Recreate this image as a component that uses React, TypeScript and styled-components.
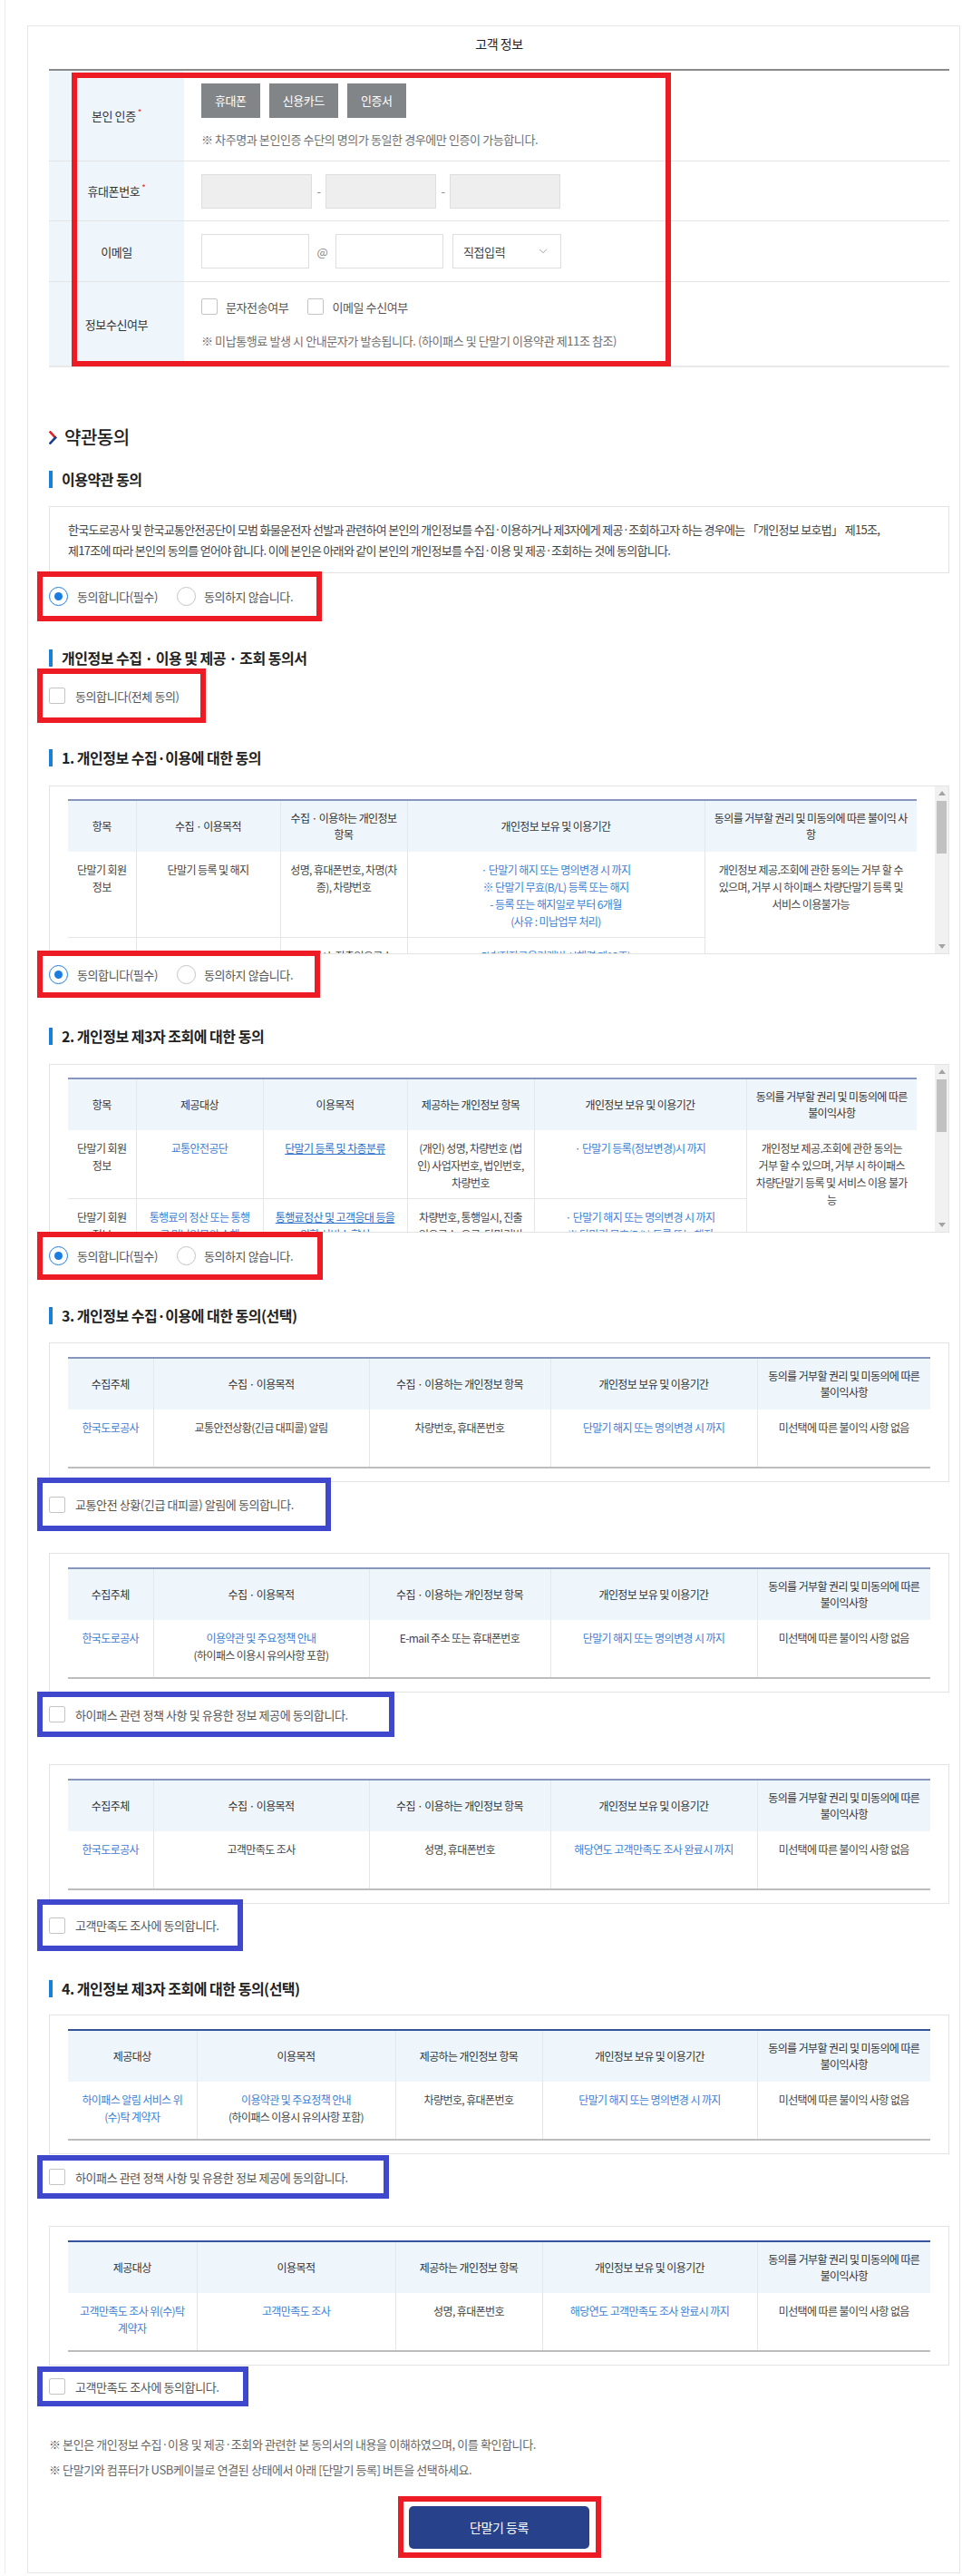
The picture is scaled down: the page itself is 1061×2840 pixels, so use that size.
import React from "react"
import styled, { createGlobalStyle } from "styled-components"
import { ChevronDown } from "lucide-react"

const RED = "#ed1c24"
const BLUE_MARK = "#3f47cc"
const LINK = "#3b80d6"

const GlobalStyle = createGlobalStyle`
  html, body { margin: 0; padding: 0; background: #fff; }
  body {
    font-family: "Noto Sans CJK KR", "Noto Sans", sans-serif;
    color: #333;
    font-size: 13px;
    letter-spacing: -0.4px;
  }
  * { box-sizing: border-box; }
`

const Page = styled.div`
  width: 1061px;
  padding-left: 5px;
`
const Frame = styled.div`
  border-left: 1px solid #ebebeb;
  padding: 28px 0 0 24px;
`
const Card = styled.div`
  width: 1029px;
  border: 1px solid #e6e6e6;
  padding: 0 11px 16px 23px;
  display: flex;
  flex-direction: column;
`
const Title = styled.div`
  height: 47px;
  padding-bottom: 9px;
  display: flex;
  align-items: center;
  justify-content: center;
  font-size: 14px;
  color: #222;
`

/* ---------- customer info table ---------- */
const InfoWrap = styled.div`
  position: relative;
  border-top: 2px solid #8a8a8a;
  border-bottom: 2px solid #e9e9e9;
`
const InfoRow = styled.div<{ $h: number; $last?: boolean }>`
  display: grid;
  grid-template-columns: 149px 1fr;
  height: ${p => p.$h}px;
  border-bottom: ${p => (p.$last ? "none" : "1px solid #e4e4e4")};
`
const Label = styled.div`
  background: #eef6fc;
  display: flex;
  align-items: center;
  justify-content: center;
  font-size: 13px;
  color: #333;
`
const Req = styled.span`
  color: #e5322d;
  font-size: 10px;
  margin-left: 2px;
  position: relative;
  top: -4px;
`
const Value = styled.div<{ $gap?: number }>`
  display: flex;
  flex-direction: column;
  justify-content: center;
  gap: ${p => p.$gap ?? 0}px;
  padding: 0 19px;
`
const Line = styled.div<{ $gap?: number }>`
  display: flex;
  align-items: center;
  gap: ${p => p.$gap ?? 0}px;
`
const AuthButton = styled.button`
  height: 38px;
  padding: 0 15px;
  border: none;
  background: #818588;
  color: #fff;
  font-family: inherit;
  font-size: 13px;
  letter-spacing: -0.4px;
`
const Note = styled.div`
  line-height: 20px;
  color: #707070;
  font-size: 13px;
`
const Field = styled.input<{ $w: number; $gray?: boolean }>`
  width: ${p => p.$w}px;
  height: 38px;
  border: 1px solid #dedede;
  background: ${p => (p.$gray ? "#eeeeee" : "#fff")};
  font-family: inherit;
  outline: none;
`
const Sep = styled.span<{ $w: number }>`
  width: ${p => p.$w}px;
  text-align: center;
  color: #888;
  font-size: 13px;
`
const Select = styled.div`
  width: 120px;
  height: 38px;
  margin-left: 10px;
  border: 1px solid #dedede;
  display: flex;
  align-items: center;
  justify-content: space-between;
  padding: 0 12px 0 11px;
  color: #444;
  font-size: 13px;
`
const InfoMark = styled.div`
  position: absolute;
  left: 25px;
  top: 2px;
  width: 661px;
  height: 324px;
  border: 6px solid ${RED};
  pointer-events: none;
`

/* ---------- headings & text ---------- */
const MainHeading = styled.h2`
  margin: 63px 0 0;
  display: flex;
  align-items: center;
  gap: 8px;
  font-size: 20px;
  font-weight: 500;
  line-height: 28px;
  color: #222;
  letter-spacing: -0.5px;
`
const SubHeading = styled.h3<{ $mt: number }>`
  margin: ${p => p.$mt}px 0 0;
  display: flex;
  align-items: center;
  font-size: 16px;
  font-weight: 700;
  line-height: 24px;
  color: #222;
  letter-spacing: -0.5px;
  &::before {
    content: "";
    width: 4px;
    height: 19px;
    background: #1a7fd6;
    margin-right: 10px;
  }
`
const TermsBox = styled.div`
  margin-top: 18px;
  border: 1px solid #e3e3e3;
  padding: 13px 20px;
  font-size: 13px;
  letter-spacing: -0.7px;
  line-height: 23px;
  color: #444;
  white-space: nowrap;
`

/* ---------- annotation boxes with controls ---------- */
const MarkBox = styled.div<{ $c: string; $w: number; $h: number; $mt: number }>`
  display: flex;
  align-items: center;
  width: ${p => p.$w}px;
  height: ${p => p.$h}px;
  margin: ${p => p.$mt}px 0 0 -13px;
  padding-left: 7px;
  border: 6px solid ${p => p.$c};
  position: relative;
  background: #fff;
  white-space: nowrap;
`
const Option = styled.label<{ $gap: number }>`
  display: inline-flex;
  align-items: center;
  gap: ${p => p.$gap}px;
  color: #555;
  font-size: 13px;
  & + & {
    margin-left: 21px;
  }
`
const Radio = styled.span<{ $on?: boolean }>`
  width: 21px;
  height: 21px;
  border-radius: 50%;
  border: ${p => (p.$on ? "1.5px solid #1b7de0" : "1px solid #c4c4c4")};
  display: flex;
  align-items: center;
  justify-content: center;
  &::after {
    content: "";
    width: 9px;
    height: 9px;
    border-radius: 50%;
    background: ${p => (p.$on ? "#1b7de0" : "transparent")};
  }
`
const Check = styled.span`
  width: 18px;
  height: 18px;
  border: 1px solid #c4c4c4;
  border-radius: 2px;
  background: #fff;
  flex-shrink: 0;
`

/* ---------- tables ---------- */
const ScrollBox = styled.div<{ $mt: number }>`
  margin-top: ${p => p.$mt}px;
  height: 186px;
  border: 1px solid #e3e3e3;
  display: flex;
`
const ScrollBody = styled.div`
  flex: 1;
  overflow: hidden;
  padding: 14px 20px 0;
`
const Bar = styled.div`
  width: 15px;
  flex-shrink: 0;
  background: #f1f1f1;
  display: flex;
  flex-direction: column;
`
const BarArrow = styled.div<{ $down?: boolean }>`
  height: 15px;
  display: flex;
  align-items: center;
  justify-content: center;
  &::before {
    content: "";
    border-left: 4px solid transparent;
    border-right: 4px solid transparent;
    ${p => (p.$down ? "border-top: 5px solid #a3a3a3;" : "border-bottom: 5px solid #a3a3a3;")}
  }
`
const Thumb = styled.div`
  height: 58px;
  margin: 1px 2px 0;
  background: #c1c1c1;
`
const BarSpace = styled.div`
  flex: 1;
`
const TableBox = styled.div<{ $mt: number }>`
  margin-top: ${p => p.$mt}px;
  border: 1px solid #e3e3e3;
  padding: 15px 20px 14px;
`
const Table = styled.table<{ $top: string; $closed?: boolean }>`
  width: 100%;
  border-collapse: collapse;
  table-layout: fixed;
  border-top: 2px solid ${p => p.$top};
  border-bottom: ${p => (p.$closed ? "2px solid #bdbdbd" : "none")};
  font-size: 12px;
  letter-spacing: -0.6px;
  line-height: 19px;
`
const Col = styled.col<{ $w: number }>`
  width: ${p => p.$w}px;
`
const Th = styled.th`
  background: #eef6fc;
  height: 57px;
  padding: 0 10px;
  font-weight: 400;
  color: #333;
  line-height: 18px;
  vertical-align: middle;
  border-left: 1px solid #e3e8ee;
  &:first-child {
    border-left: none;
  }
`
const Td = styled.td<{ $blue?: boolean; $h?: number }>`
  height: ${p => (p.$h ? `${p.$h}px` : "auto")};
  padding: 10px 10px 8px;
  text-align: center;
  vertical-align: top;
  color: ${p => (p.$blue ? LINK : "#444")};
  border-left: 1px solid #e5e5e5;
  border-bottom: 1px solid #e5e5e5;
  &:first-child {
    border-left: none;
  }
`
const Link = styled.span`
  color: #2a6fc9;
  text-decoration: underline;
`
const Blue = styled.span`
  color: ${LINK};
`

/* ---------- bottom ---------- */
const Notes = styled.div`
  margin-top: 28px;
  line-height: 28px;
  color: #666;
  font-size: 13px;
`
const SubmitMark = styled.div`
  align-self: center;
  margin-top: 15px;
  width: 224px;
  height: 68px;
  border: 6px solid ${RED};
  display: flex;
  align-items: center;
  justify-content: center;
`
const Submit = styled.button`
  width: 199px;
  height: 47px;
  border: none;
  border-radius: 5px;
  background: #27418a;
  color: #fff;
  font-family: inherit;
  font-size: 14px;
  letter-spacing: -0.4px;
`

const Chevron = () => (
  <svg width="9" height="15" viewBox="0 0 9 15">
    <path d="M1.5 1.5 L7 7.5" stroke="#e1232a" strokeWidth="2.6" strokeLinecap="square" fill="none" />
    <path d="M7 7.5 L1.5 13.5" stroke="#1f3b8f" strokeWidth="2.6" strokeLinecap="square" fill="none" />
  </svg>
)

const FakeScroll = () => (
  <Bar>
    <BarArrow />
    <Thumb />
    <BarSpace />
    <BarArrow $down />
  </Bar>
)

const Cols = ({ w }: { w: number[] }) => (
  <colgroup>
    {w.map((x, i) => (
      <Col key={i} $w={x} />
    ))}
  </colgroup>
)

const AgreeRadios = ({ w, h, mt }: { w: number; h: number; mt: number }) => (
  <MarkBox $c={RED} $w={w} $h={h} $mt={mt}>
    <Option $gap={10}>
      <Radio $on />
      동의합니다(필수)
    </Option>
    <Option $gap={9}>
      <Radio />
      동의하지 않습니다.
    </Option>
  </MarkBox>
)

const AgreeCheck = ({ c, w, h, mt, text }: { c: string; w: number; h: number; mt: number; text: string }) => (
  <MarkBox $c={c} $w={w} $h={h} $mt={mt}>
    <Option $gap={11}>
      <Check />
      {text}
    </Option>
  </MarkBox>
)

type Cell = { text: React.ReactNode; blue?: boolean }

const SimpleTable = ({ mt, cols, top, head, cells }: { mt: number; cols: number[]; top: string; head: React.ReactNode[]; cells: Cell[] }) => (
  <TableBox $mt={mt}>
    <Table $top={top} $closed>
      <Cols w={cols} />
      <thead>
        <tr>
          {head.map((h, i) => (
            <Th key={i}>{h}</Th>
          ))}
        </tr>
      </thead>
      <tbody>
        <tr>
          {cells.map((c, i) => (
            <Td key={i} $blue={c.blue} $h={64}>
              {c.text}
            </Td>
          ))}
        </tr>
      </tbody>
    </Table>
  </TableBox>
)

const COLLECT_HEAD = ["수집주체", "수집 · 이용목적", "수집 · 이용하는 개인정보 항목", "개인정보 보유 및 이용기간", "동의를 거부할 권리 및 미동의에 따른 불이익사항"]
const PROVIDE_HEAD = ["제공대상", "이용목적", "제공하는 개인정보 항목", "개인정보 보유 및 이용기간", "동의를 거부할 권리 및 미동의에 따른 불이익사항"]
const COLLECT_COLS = [94, 238, 200, 228, 191]
const PROVIDE_COLS = [142, 219, 162, 237, 191]
const NAVY_TOP = "#34559c"
const GRAY_TOP = "#8796bd"

export default function App() {
  return (
    <>
      <GlobalStyle />
      <Page>
        <Frame>
          <Card>
            <Title>고객 정보</Title>

            <InfoWrap>
              <InfoRow $h={100}>
                <Label>
                  본인 인증<Req>*</Req>
                </Label>
                <Value $gap={14}>
                  <Line $gap={10}>
                    <AuthButton>휴대폰</AuthButton>
                    <AuthButton>신용카드</AuthButton>
                    <AuthButton>인증서</AuthButton>
                  </Line>
                  <Note>※ 차주명과 본인인증 수단의 명의가 동일한 경우에만 인증이 가능합니다.</Note>
                </Value>
              </InfoRow>
              <InfoRow $h={66}>
                <Label>
                  휴대폰번호<Req>*</Req>
                </Label>
                <Value>
                  <Line>
                    <Field $w={122} $gray readOnly />
                    <Sep $w={15}>-</Sep>
                    <Field $w={122} $gray readOnly />
                    <Sep $w={15}>-</Sep>
                    <Field $w={122} $gray readOnly />
                  </Line>
                </Value>
              </InfoRow>
              <InfoRow $h={67}>
                <Label>이메일</Label>
                <Value>
                  <Line>
                    <Field $w={119} readOnly />
                    <Sep $w={29}>@</Sep>
                    <Field $w={119} readOnly />
                    <Select>
                      직접입력
                      <ChevronDown size={14} strokeWidth={1.2} color="#777" />
                    </Select>
                  </Line>
                </Value>
              </InfoRow>
              <InfoRow $h={92} $last>
                <Label>정보수신여부</Label>
                <Value $gap={18}>
                  <Line>
                    <Option $gap={9}>
                      <Check />
                      문자전송여부
                    </Option>
                    <Option $gap={9}>
                      <Check />
                      이메일 수신여부
                    </Option>
                  </Line>
                  <Note>※ 미납통행료 발생 시 안내문자가 발송됩니다. (하이패스 및 단말기 이용약관 제11조 참조)</Note>
                </Value>
              </InfoRow>
              <InfoMark />
            </InfoWrap>

            <MainHeading>
              <Chevron />
              약관동의
            </MainHeading>

            <SubHeading $mt={20}>이용약관 동의</SubHeading>
            <TermsBox>
              한국도로공사 및 한국교통안전공단이 모범 화물운전자 선발과 관련하여 본인의 개인정보를 수집·이용하거나 제3자에게 제공·조회하고자 하는 경우에는 「개인정보 보호법」 제15조,
              <br />
              제17조에 따라 본인의 동의를 얻어야 합니다. 이에 본인은 아래와 같이 본인의 개인정보를 수집·이용 및 제공·조회하는 것에 동의합니다.
            </TermsBox>
            <AgreeRadios w={314} h={55} mt={-2} />

            <SubHeading $mt={28}>개인정보 수집 · 이용 및 제공 · 조회 동의서</SubHeading>
            <AgreeCheck c={RED} w={186} h={60} mt={0} text="동의합니다(전체 동의)" />

            <SubHeading $mt={26}>1. 개인정보 수집·이용에 대한 동의</SubHeading>
            <ScrollBox $mt={19}>
              <ScrollBody>
                <Table $top={GRAY_TOP}>
                  <Cols w={[75, 159, 140, 328, 234]} />
                  <thead>
                    <tr>
                      <Th>항목</Th>
                      <Th>수집 · 이용목적</Th>
                      <Th>수집 · 이용하는 개인정보 항목</Th>
                      <Th>개인정보 보유 및 이용기간</Th>
                      <Th>동의를 거부할 권리 및 미동의에 따른 불이익 사항</Th>
                    </tr>
                  </thead>
                  <tbody>
                    <tr>
                      <Td>단말기 회원정보</Td>
                      <Td>단말기 등록 및 해지</Td>
                      <Td>성명, 휴대폰번호, 차명(차종), 차량번호</Td>
                      <Td $blue>
                        · 단말기 해지 또는 명의변경 시 까지
                        <br />※ 단말기 무효(B/L) 등록 또는 해지
                        <br />- 등록 또는 해지일로 부터 6개월
                        <br />
                        (사유 : 미납업무 처리)
                      </Td>
                      <Td rowSpan={2}>개인정보 제공.조회에 관한 동의는 거부 할 수 있으며, 거부 시 하이패스 차량단말기 등록 및 서비스 이용불가능</Td>
                    </tr>
                    <tr>
                      <Td>단말기 회원정보</Td>
                      <Td>
                        통행료의 정산 또는 <Blue>통행료 미납업무의 수행</Blue>
                      </Td>
                      <Td>통행일시, 진출입요금소, 요금, 차량번호</Td>
                      <Td $blue>5년(전자금융거래법 시행령 제12조)</Td>
                    </tr>
                  </tbody>
                </Table>
              </ScrollBody>
              <FakeScroll />
            </ScrollBox>
            <AgreeRadios w={312} h={52} mt={-4} />

            <SubHeading $mt={30}>2. 개인정보 제3자 조회에 대한 동의</SubHeading>
            <ScrollBox $mt={19}>
              <ScrollBody>
                <Table $top={GRAY_TOP}>
                  <Cols w={[75, 140, 159, 140, 234, 188]} />
                  <thead>
                    <tr>
                      <Th>항목</Th>
                      <Th>제공대상</Th>
                      <Th>이용목적</Th>
                      <Th>제공하는 개인정보 항목</Th>
                      <Th>개인정보 보유 및 이용기간</Th>
                      <Th>동의를 거부할 권리 및 미동의에 따른 불이익사항</Th>
                    </tr>
                  </thead>
                  <tbody>
                    <tr>
                      <Td>단말기 회원정보</Td>
                      <Td $blue>교통안전공단</Td>
                      <Td>
                        <Link>단말기 등록 및 차종분류</Link>
                      </Td>
                      <Td>(개인) 성명, 차량번호 (법인) 사업자번호, 법인번호, 차량번호</Td>
                      <Td $blue>· 단말기 등록(정보변경)시 까지</Td>
                      <Td rowSpan={2}>개인정보 제공.조회에 관한 동의는 거부 할 수 있으며, 거부 시 하이패스 차량단말기 등록 및 서비스 이용 불가능</Td>
                    </tr>
                    <tr>
                      <Td>단말기 회원정보</Td>
                      <Td $blue>통행료의 정산 또는 통행료 미납업무의 수행</Td>
                      <Td>
                        <Link>통행료정산 및 고객응대 등을 위한 서비스 향상</Link>
                      </Td>
                      <Td>차량번호, 통행일시, 진출입요금소, 요금, 단말기번호</Td>
                      <Td $blue>
                        · 단말기 해지 또는 명의변경 시 까지
                        <br />※ 단말기 무효(B/L) 등록 또는 해지
                      </Td>
                    </tr>
                  </tbody>
                </Table>
              </ScrollBody>
              <FakeScroll />
            </ScrollBox>
            <AgreeRadios w={315} h={53} mt={-1} />

            <SubHeading $mt={27}>3. 개인정보 수집·이용에 대한 동의(선택)</SubHeading>
            <SimpleTable
              mt={18}
              cols={COLLECT_COLS}
              top={GRAY_TOP}
              head={COLLECT_HEAD}
              cells={[
                { text: "한국도로공사", blue: true },
                { text: "교통안전상황(긴급 대피콜) 알림" },
                { text: "차량번호, 휴대폰번호" },
                { text: "단말기 해지 또는 명의변경 시 까지", blue: true },
                { text: "미선택에 따른 불이익 사항 없음" },
              ]}
            />
            <AgreeCheck c={BLUE_MARK} w={324} h={59} mt={-5} text="교통안전 상황(긴급 대피콜) 알림에 동의합니다." />

            <SimpleTable
              mt={24}
              cols={COLLECT_COLS}
              top={GRAY_TOP}
              head={COLLECT_HEAD}
              cells={[
                { text: "한국도로공사", blue: true },
                {
                  text: (
                    <>
                      <Blue>이용약관 및 주요정책 안내</Blue>
                      <br />
                      (하이패스 이용시 유의사항 포함)
                    </>
                  ),
                },
                { text: "E-mail 주소 또는 휴대폰번호" },
                { text: "단말기 해지 또는 명의변경 시 까지", blue: true },
                { text: "미선택에 따른 불이익 사항 없음" },
              ]}
            />
            <AgreeCheck c={BLUE_MARK} w={394} h={50} mt={-1} text="하이패스 관련 정책 사항 및 유용한 정보 제공에 동의합니다." />

            <SimpleTable
              mt={30}
              cols={COLLECT_COLS}
              top={GRAY_TOP}
              head={COLLECT_HEAD}
              cells={[
                { text: "한국도로공사", blue: true },
                { text: "고객만족도 조사" },
                { text: "성명, 휴대폰번호" },
                { text: "해당연도 고객만족도 조사 완료시 까지", blue: true },
                { text: "미선택에 따른 불이익 사항 없음" },
              ]}
            />
            <AgreeCheck c={BLUE_MARK} w={227} h={57} mt={-5} text="고객만족도 조사에 동의합니다." />

            <SubHeading $mt={29}>4. 개인정보 제3자 조회에 대한 동의(선택)</SubHeading>
            <SimpleTable
              mt={17}
              cols={PROVIDE_COLS}
              top={NAVY_TOP}
              head={PROVIDE_HEAD}
              cells={[
                { text: "하이패스 알림 서비스 위(수)탁 계약자", blue: true },
                {
                  text: (
                    <>
                      <Blue>이용약관 및 주요정책 안내</Blue>
                      <br />
                      (하이패스 이용시 유의사항 포함)
                    </>
                  ),
                },
                { text: "차량번호, 휴대폰번호" },
                { text: "단말기 해지 또는 명의변경 시 까지", blue: true },
                { text: "미선택에 따른 불이익 사항 없음" },
              ]}
            />
            <AgreeCheck c={BLUE_MARK} w={388} h={48} mt={1} text="하이패스 관련 정책 사항 및 유용한 정보 제공에 동의합니다." />

            <SimpleTable
              mt={30}
              cols={PROVIDE_COLS}
              top={NAVY_TOP}
              head={PROVIDE_HEAD}
              cells={[
                { text: "고객만족도 조사 위(수)탁 계약자", blue: true },
                { text: "고객만족도 조사", blue: true },
                { text: "성명, 휴대폰번호" },
                { text: "해당연도 고객만족도 조사 완료시 까지", blue: true },
                { text: "미선택에 따른 불이익 사항 없음" },
              ]}
            />
            <AgreeCheck c={BLUE_MARK} w={233} h={44} mt={1} text="고객만족도 조사에 동의합니다." />

            <Notes>
              <div>※ 본인은 개인정보 수집·이용 및 제공·조회와 관련한 본 동의서의 내용을 이해하였으며, 이를 확인합니다.</div>
              <div>※ 단말기와 컴퓨터가 USB케이블로 연결된 상태에서 아래 [단말기 등록] 버튼을 선택하세요.</div>
            </Notes>
            <SubmitMark>
              <Submit>단말기 등록</Submit>
            </SubmitMark>
          </Card>
        </Frame>
      </Page>
    </>
  )
}
